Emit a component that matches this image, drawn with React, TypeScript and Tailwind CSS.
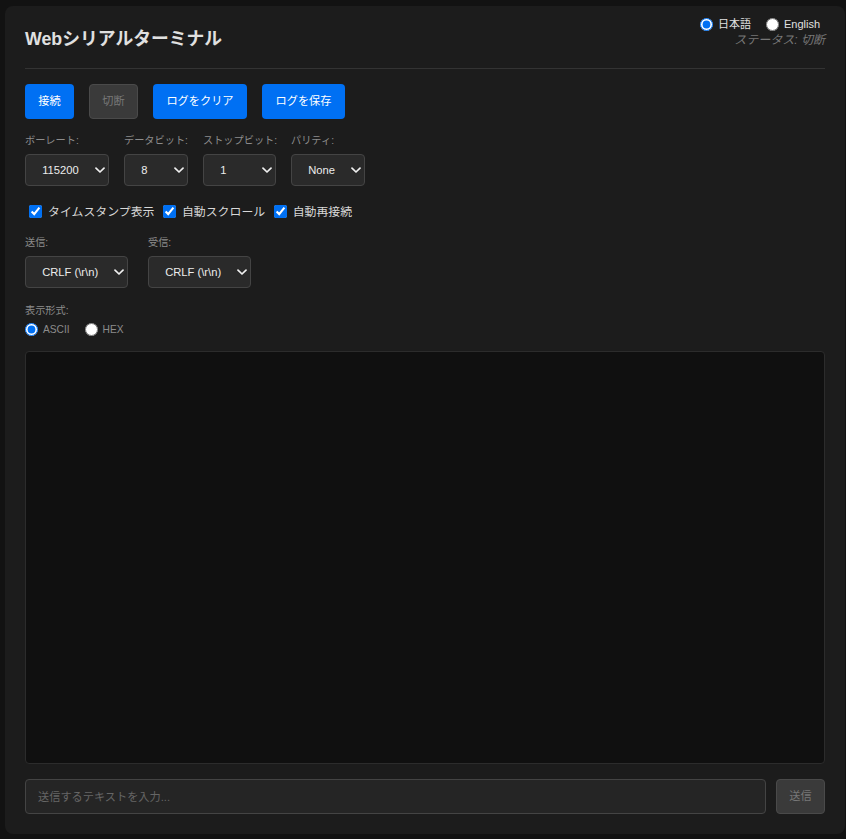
const font = { fontFamily: '"Liberation Sans", "Noto Sans CJK JP", sans-serif' };

function Chevron() {
  return (
    <svg className="pointer-events-none absolute right-[4px] top-1/2 -translate-y-1/2" width="10" height="8" viewBox="0 0 10 8" fill="none">
      <path d="M1 2.2 L5 6 L9 2.2" stroke="#f0f0f0" strokeWidth="1.7" strokeLinecap="round" strokeLinejoin="round" />
    </svg>
  );
}

function Field({ label, value, width }: { label: string; value: string; width: string }) {
  return (
    <div className={`flex flex-col ${width}`}>
      <label className="text-[10.2px] leading-[14px] text-[#8c8c8c] mb-[6px] whitespace-nowrap">{label}</label>
      <div className="relative h-[32px] w-full">
        <select defaultValue={value} className="appearance-none w-full h-full rounded-[4px] border border-[#444] bg-[#2a2a2a] pl-[16.2px] text-[11.2px] text-[#ececec] outline-none">
          <option>{value}</option>
        </select>
        <Chevron />
      </div>
    </div>
  );
}

function Btn({ children, width, disabled }: { children: string; width: string; disabled?: boolean }) {
  return (
    <button
      disabled={disabled}
      className={
        disabled
          ? `h-[35px] ${width} rounded-[4px] border border-[#4a4a4a] bg-[#3a3a3a] text-[11.2px] text-[#777]`
          : `h-[35px] ${width} rounded-[4px] bg-[#0070f3] text-[11.2px] text-white`
      }
    >
      {children}
    </button>
  );
}

function Check({ label }: { label: string }) {
  return (
    <label className="flex items-center gap-[6px] text-[11.9px] leading-[20px] text-[#d8d8d8]">
      <input type="checkbox" defaultChecked className="m-0 -mt-[2px] w-[13px] h-[13px] accent-[#0070f3]" />
      <span>{label}</span>
    </label>
  );
}

function Radio({ label, name, checked, textClass }: { label: string; name: string; checked?: boolean; textClass?: string }) {
  return (
    <label className="flex items-center gap-[5px]">
      <input type="radio" name={name} defaultChecked={checked} className="m-0 w-[13px] h-[13px] accent-[#0070f3]" />
      <span className={textClass}>{label}</span>
    </label>
  );
}

export default function App() {
  return (
    <div className="min-h-[839px] bg-[#121212] pl-[5px] pr-[1px] pt-[6px] pb-[5px]" style={font}>
      <div className="relative h-[828px] flex flex-col rounded-[8px] bg-[#1c1c1c] px-[20px] pt-[20px] pb-[20px]">
        <div className="absolute right-[20px] top-[11px] flex flex-col items-end">
          <div className="flex items-center gap-[15px] mr-[5px] text-[11px] leading-[14px] text-[#e0e0e0]">
            <Radio label="日本語" name="lang" checked />
            <Radio label="English" name="lang" />
          </div>
          <div className="text-[12px] leading-[16px] italic text-[#777] mt-[1px]">ステータス: 切断</div>
        </div>

        <h1 className="text-[17.8px] leading-[24px] font-bold text-[#e0e0e0] pt-[1px] pb-[17px] border-b border-[#333]">Webシリアルターミナル</h1>

        <div className="flex gap-[15px] mt-[15px]">
          <Btn width="w-[49px]">接続</Btn>
          <Btn width="w-[49px]" disabled>切断</Btn>
          <Btn width="w-[94px]">ログをクリア</Btn>
          <Btn width="w-[83px]">ログを保存</Btn>
        </div>

        <div className="flex gap-[15px] mt-[15px]">
          <Field label="ボーレート:" value="115200" width="w-[84px]" />
          <Field label="データビット:" value="8" width="w-[64px]" />
          <Field label="ストップビット:" value="1" width="w-[73px]" />
          <Field label="パリティ:" value="None" width="w-[74px]" />
        </div>

        <div className="flex gap-[8.5px] mt-[16px] pl-[4px] h-[20px] items-center">
          <Check label="タイムスタンプ表示" />
          <Check label="自動スクロール" />
          <Check label="自動再接続" />
        </div>

        <div className="flex gap-[20px] mt-[14px]">
          <Field label="送信:" value="CRLF (\r\n)" width="w-[103px]" />
          <Field label="受信:" value="CRLF (\r\n)" width="w-[103px]" />
        </div>

        <div className="mt-[16px]">
          <div className="text-[10.2px] leading-[14px] text-[#8c8c8c]">表示形式:</div>
          <div className="flex gap-[15px] mt-[4px] text-[10.2px] leading-[14px] text-[#8c8c8c]">
            <Radio label="ASCII" name="fmt" checked textClass="pt-[1px]" />
            <Radio label="HEX" name="fmt" textClass="pt-[1px]" />
          </div>
        </div>

        <div className="flex-1 mt-[14px] rounded-[4px] border border-[#2c2c2c] bg-[#101010]" />

        <div className="flex gap-[10px] mt-[15px]">
          <input placeholder="送信するテキストを入力..." className="flex-1 h-[35px] rounded-[4px] border border-[#444] bg-[#252525] px-[12px] text-[11.2px] text-[#e0e0e0] outline-none placeholder:text-[#666]" />
          <button disabled className="h-[35px] w-[49px] rounded-[4px] border border-[#4a4a4a] bg-[#3a3a3a] text-[11.2px] text-[#777]">送信</button>
        </div>
      </div>
    </div>
  );
}
